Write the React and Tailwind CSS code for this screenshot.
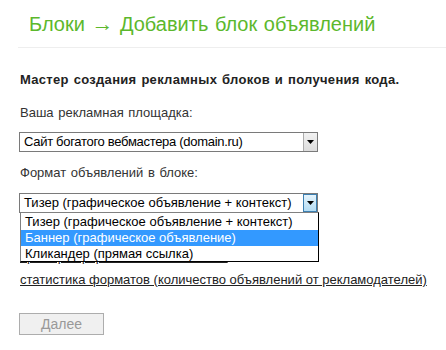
import React from "react";

function Arrow() {
  return (
    <svg width="7" height="4" viewBox="0 0 7 4" className="block">
      <path d="M0 0 H7 L3.5 4 Z" fill="#000" />
    </svg>
  );
}

export default function App() {
  const font = { fontFamily: '"Liberation Sans", Arial, sans-serif' };
  return (
    <div className="w-[446px] h-[350px] bg-white overflow-hidden relative" style={font}>
      <div className="ml-[18px]">
        <h1 className="pt-[12px] pb-[11px] pl-[11px] text-[20px] leading-[24px] font-normal text-[#5cb82c] border-b border-[#eeeeee] [word-spacing:1px]">
          Блоки <span className="text-[22px]">→</span> Добавить блок объявлений
        </h1>
      </div>
      <div className="pl-[20px] text-[13px] leading-[16px] text-[#333]">
        <div className="mt-[24px] font-bold text-[#222] tracking-[0.3px] [word-spacing:1px]">Мастер создания рекламных блоков и получения кода.</div>
        <div className="mt-[17px] [word-spacing:1px]">Ваша рекламная площадка:</div>
        <div className="-ml-[1px] mt-[11px] w-[299px] h-[20px] border border-[#7a7a7a] flex items-stretch bg-white">
          <div className="flex-1 pl-[4px] text-[13px] leading-[18px] text-black whitespace-nowrap overflow-hidden tracking-[-0.3px]">Сайт богатого вебмастера (domain.ru)</div>
          <div className="w-[14px] border-l border-[#acacac] bg-gradient-to-b from-[#f2f2f2] to-[#dcdcdc] flex items-center justify-center">
            <Arrow />
          </div>
        </div>
        <div className="mt-[13px] [word-spacing:1px]">Формат объявлений в блоке:</div>
        <div className="relative -ml-[1px] mt-[12px] w-[299px] h-[20px] border border-[#7a7a7a] flex items-stretch bg-white">
          <div className="flex-1 pl-[4px] text-[13px] leading-[18px] text-black whitespace-nowrap overflow-hidden">Тизер (графическое объявление + контекст)</div>
          <div className="w-[14px] border border-[#3c7fb1] bg-gradient-to-b from-[#e5f4fc] to-[#b3dcf3] flex items-center justify-center">
            <Arrow />
          </div>
          <div className="absolute left-0 top-[18px] w-[299px] border border-black border-l-[#808080] border-t-[#808080] bg-white text-[13px] leading-[16px] text-black z-10 whitespace-nowrap">
            <div className="pl-[4px] h-[17px] leading-[17px]">Тизер (графическое объявление + контекст)</div>
            <div className="pl-[4px] h-[16px] bg-[#3399ff] text-white">Баннер (графическое объявление)</div>
            <div className="pl-[4px] h-[15px] leading-[15px]">Кликандер (прямая ссылка)</div>
          </div>
        </div>
        <div className="mt-[36px]">
          <a href="#" className="underline text-[#222]">примеры форматов и их описание</a>
        </div>
        <div className="mt-[7px]">
          <a href="#" className="underline text-[#222]">статистика форматов (количество объявлений от рекламодателей)</a>
        </div>
        <button className="-ml-[1px] mt-[25px] w-[85px] h-[22px] border border-[#adadad] bg-[#f0f0f0] text-[#999] text-[14px] leading-[20px]" style={font}>
          Далее
        </button>
      </div>
    </div>
  );
}
